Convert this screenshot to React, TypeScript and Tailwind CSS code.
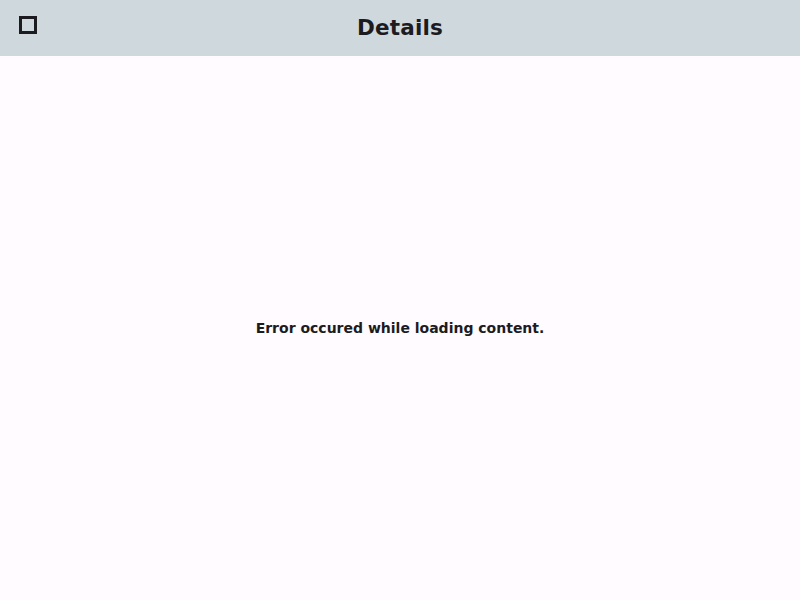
import React from 'react';

const App = () => {
  return (
    <div className="w-[800px] h-[600px] flex flex-col bg-[#fffbfe] text-[#1c1b1f] font-['DejaVu_Sans',sans-serif]">
      <div className="h-14 shrink-0 bg-[#cfd8dc] relative flex items-center justify-center">
        <div className="absolute left-[19px] top-[16px] w-[18px] h-[18px] border-[3px] border-[#1c1b1f]" />
        <h1 className="text-[21.5px] font-bold tracking-[0.2px]">Details</h1>
      </div>
      <div className="flex-1 flex items-center justify-center">
        <p className="text-[14px] font-bold">Error occured while loading content.</p>
      </div>
    </div>
  );
};

export default App;
